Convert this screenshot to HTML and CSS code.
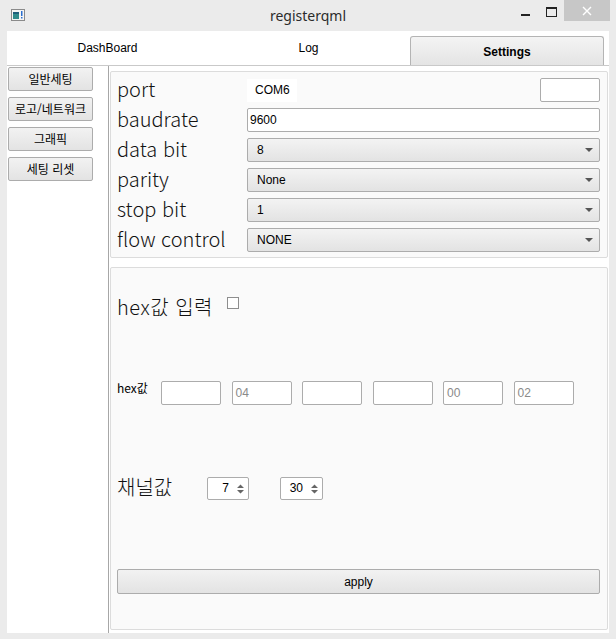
FILE: index.html
```html
<!DOCTYPE html>
<html lang="ko">
<head>
    <meta charset="UTF-8">
    <title>registerqml</title>
    <link rel="stylesheet" href="styles.css">
</head>
<body>
    <div class="window">
        <header class="titlebar">
            <svg class="app-icon" width="14" height="12" viewBox="0 0 14 12">
                <rect x="0.5" y="0.5" width="13" height="11" fill="#f4f4f4" stroke="#8a8a8a"/>
                <rect x="2" y="3" width="6" height="7" fill="#2f8a8a"/>
                <rect x="2" y="3" width="6" height="2" fill="#1e5f7a"/>
                <rect x="10" y="2" width="1.5" height="5" fill="#2a6fd0"/>
                <rect x="10" y="8" width="1.5" height="1.5" fill="#2a6fd0"/>
            </svg>
            <div class="title">registerqml</div>
            <div class="caption">
                <span class="cap-min"></span>
                <span class="cap-max"></span>
                <span class="cap-close">
                    <svg width="10" height="10" viewBox="0 0 10 10">
                        <path d="M1 1 L9 9 M9 1 L1 9" stroke="#fff" stroke-width="1.4"/>
                    </svg>
                </span>
            </div>
        </header>

        <div class="client">
            <nav class="tabbar">
                <div class="tab">DashBoard</div>
                <div class="tab">Log</div>
                <div class="tab active">Settings</div>
            </nav>

            <div class="page">
                <aside class="sidebar">
                    <button class="btn side-btn">일반세팅</button>
                    <button class="btn side-btn">로고/네트워크</button>
                    <button class="btn side-btn">그래픽</button>
                    <button class="btn side-btn">세팅 리셋</button>
                </aside>

                <main class="content">
                    <section class="group serial">
                        <div class="row">
                            <span class="big-label">port</span>
                            <span class="port-name">COM6</span>
                            <span class="field port-extra"></span>
                        </div>
                        <div class="row">
                            <span class="big-label">baudrate</span>
                            <span class="field wide">9600</span>
                        </div>
                        <div class="row">
                            <span class="big-label">data bit</span>
                            <span class="combo">8<i class="arrow"></i></span>
                        </div>
                        <div class="row">
                            <span class="big-label">parity</span>
                            <span class="combo">None<i class="arrow"></i></span>
                        </div>
                        <div class="row">
                            <span class="big-label">stop bit</span>
                            <span class="combo">1<i class="arrow"></i></span>
                        </div>
                        <div class="row">
                            <span class="big-label">flow control</span>
                            <span class="combo">NONE<i class="arrow"></i></span>
                        </div>
                    </section>

                    <section class="group hex">
                        <div class="hex-check">
                            <span class="big-label">hex값 입력</span>
                            <span class="checkbox"></span>
                        </div>

                        <div class="hex-row">
                            <span class="small-label">hex값</span>
                            <div class="hex-fields">
                                <span class="field hex-field"></span>
                                <span class="field hex-field">04</span>
                                <span class="field hex-field"></span>
                                <span class="field hex-field"></span>
                                <span class="field hex-field">00</span>
                                <span class="field hex-field">02</span>
                            </div>
                        </div>

                        <div class="channel-row">
                            <span class="big-label channel-label">채널값</span>
                            <span class="spin">7
                                <svg class="spin-arrows" width="7" height="10" viewBox="0 0 7 10">
                                    <path d="M0 4 L3.5 0.5 L7 4 Z M0 6 L3.5 9.5 L7 6 Z" fill="#666"/>
                                </svg>
                            </span>
                            <span class="spin second">30
                                <svg class="spin-arrows" width="7" height="10" viewBox="0 0 7 10">
                                    <path d="M0 4 L3.5 0.5 L7 4 Z M0 6 L3.5 9.5 L7 6 Z" fill="#666"/>
                                </svg>
                            </span>
                        </div>

                        <button class="btn apply">apply</button>
                    </section>
                </main>
            </div>
        </div>
    </div>
</body>
</html>
```

FILE: styles.css
```css
body {
    margin: 0;
    padding: 0;
    background-color: #ebebeb;
    font-family: "Liberation Sans", "Noto Sans CJK KR", sans-serif;
    font-size: 12px;
    color: #000;
}

.window {
    width: 616px;
    height: 639px;
    background-color: #ebebeb;
    display: flex;
    flex-direction: column;
}

/* title bar */
.titlebar {
    height: 31px;
    display: grid;
    grid-template-columns: 1fr auto 1fr;
    align-items: start;
}

.app-icon {
    margin: 9px 0 0 11px;
}

.title {
    font-family: "Noto Sans", sans-serif;
    font-size: 14px;
    color: #2b2b2b;
    line-height: 31px;
}

.caption {
    display: flex;
    justify-content: flex-end;
    padding-right: 6px;
}

.cap-min {
    width: 9px;
    height: 2px;
    background: #222;
    margin: 14px 16px 0 0;
}

.cap-max {
    width: 9px;
    height: 7px;
    border: 1px solid #222;
    border-top-width: 2px;
    margin: 7px 7px 0 0;
}

.cap-close {
    width: 46px;
    height: 21px;
    background: #c7c7c7;
    display: flex;
    align-items: center;
    justify-content: center;
}

/* client */
.client {
    margin: 0 7px;
    height: 602px;
    background: #fff;
    display: flex;
    flex-direction: column;
}

.tabbar {
    height: 34px;
    border-bottom: 1px solid #c9c9c9;
    display: flex;
}

.tab {
    width: 201px;
    line-height: 35px;
    text-align: center;
}

.tab.active {
    width: 192px;
    margin: 5px 0 0 1px;
    line-height: 30px;
    border: 1px solid #b4b4b4;
    border-bottom: none;
    border-radius: 3px 3px 0 0;
    background: linear-gradient(#f4f4f4, #e4e4e4);
    font-weight: bold;
}

.page {
    flex: 1;
    display: flex;
}

.sidebar {
    width: 100px;
    border-right: 1px solid #a7a7a7;
    padding: 1px 0 0 1px;
    display: flex;
    flex-direction: column;
    gap: 6px;
}

.btn {
    font-family: "Noto Sans CJK KR", sans-serif;
    font-size: 12px;
    color: #000;
    border: 1px solid #acacac;
    border-radius: 2px;
    background: linear-gradient(#f2f2f2, #e3e3e3);
    padding: 0;
}

.side-btn {
    width: 85px;
    height: 24px;
    line-height: 20px;
}

.content {
    flex: 1;
    padding: 5px 1px 3px 1px;
    display: flex;
    flex-direction: column;
    gap: 9px;
}

.group {
    background: #fafafa;
    border: 1px solid #dcdcdc;
    border-radius: 2px;
}

/* serial settings */
.serial {
    padding: 6px 7px 5px 6px;
    display: flex;
    flex-direction: column;
    gap: 6px;
}

.row {
    height: 24px;
    display: flex;
    align-items: center;
}

.big-label {
    font-family: "Noto Sans CJK KR", sans-serif;
    font-weight: 300;
    font-size: 20px;
    color: #111;
}

.row .big-label {
    width: 130px;
    line-height: 24px;
    padding-bottom: 3px;
}

.port-name {
    width: 42px;
    height: 23px;
    line-height: 23px;
    padding-left: 8px;
    background: #fff;
}

.field {
    box-sizing: border-box;
    height: 24px;
    line-height: 22px;
    background: #fff;
    border: 1px solid #acacac;
    border-radius: 2px;
    padding-left: 2px;
}

.port-extra {
    width: 60px;
    margin-left: auto;
    margin-top: -1px;
}

.wide {
    flex: 1;
}

.combo {
    box-sizing: border-box;
    flex: 1;
    height: 24px;
    line-height: 22px;
    border: 1px solid #acacac;
    border-radius: 2px;
    background: linear-gradient(#f3f3f3, #e3e3e3);
    padding-left: 9px;
    position: relative;
}

.arrow {
    position: absolute;
    right: 6px;
    top: 9px;
    border-left: 4px solid transparent;
    border-right: 4px solid transparent;
    border-top: 4px solid #555;
}

/* hex group */
.hex {
    flex: 1;
    padding: 23px 7px 0 6px;
    display: flex;
    flex-direction: column;
}

.hex-check {
    height: 30px;
    display: flex;
    align-items: center;
}

.hex-check .big-label {
    letter-spacing: 0.5px;
}

.checkbox {
    width: 10px;
    height: 10px;
    border: 1px solid #8e8e8e;
    background: #fff;
    margin: 0 0 6px 14px;
}

.hex-row {
    margin-top: 60px;
    display: flex;
    align-items: flex-start;
}

.small-label {
    font-family: "Noto Sans CJK KR", sans-serif;
    width: 44px;
    line-height: 14px;
}

.hex-fields {
    display: flex;
    gap: 10.5px;
}

.hex-field {
    width: 60px;
    color: #8a8a8a;
    padding-left: 3px;
}

.channel-row {
    margin-top: 71px;
    height: 24px;
    display: flex;
    align-items: center;
}

.channel-label {
    width: 90px;
    line-height: 24px;
    padding-bottom: 3px;
}

.spin {
    box-sizing: border-box;
    width: 42px;
    height: 23px;
    line-height: 21px;
    border: 1px solid #acacac;
    border-radius: 2px;
    background: #fff;
    text-align: right;
    padding-right: 19px;
    position: relative;
}

.spin.second {
    width: 43px;
    margin-left: 31px;
}

.spin-arrows {
    position: absolute;
    right: 4px;
    top: 6px;
}

.apply {
    margin-top: 69px;
    height: 25px;
    font-family: "Liberation Sans", sans-serif;
}
```
